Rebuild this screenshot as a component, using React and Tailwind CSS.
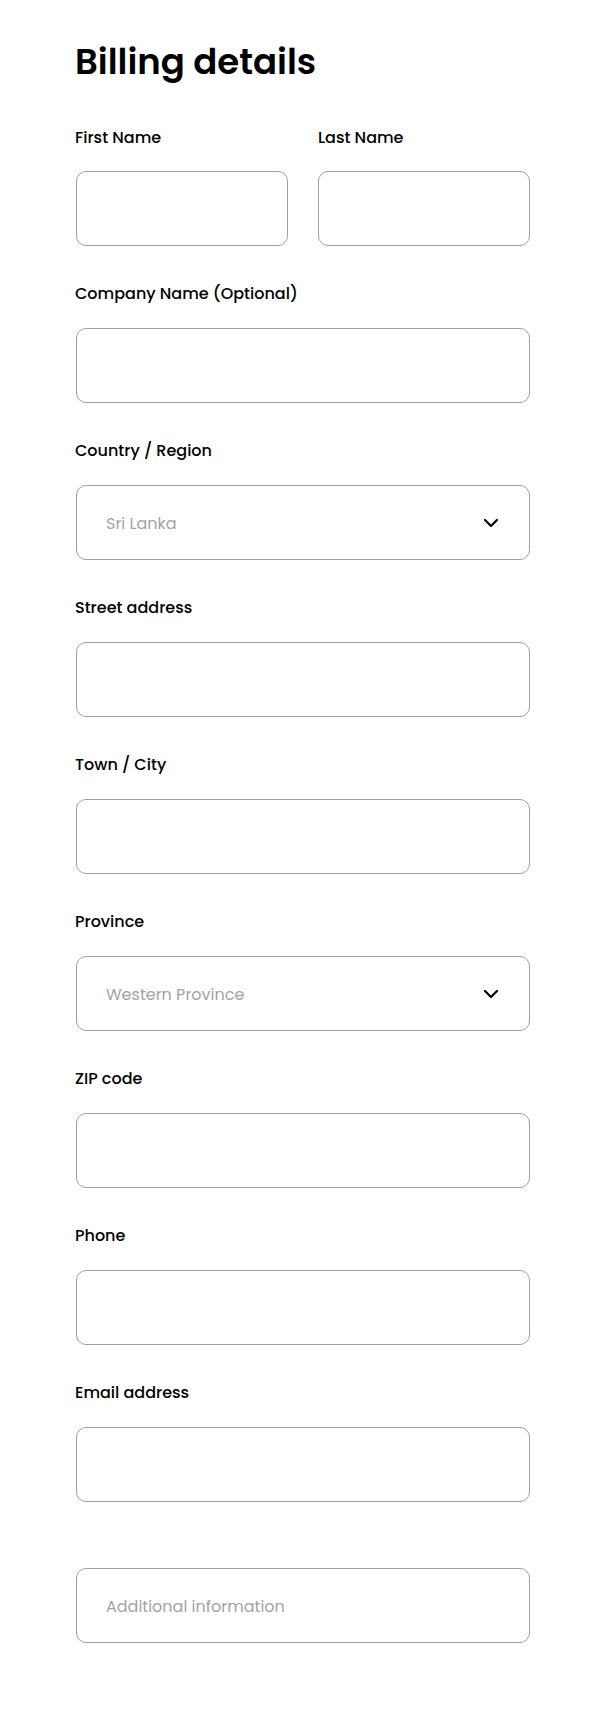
import React from "react";

const font = { fontFamily: "Poppins, Inter, 'Noto Sans', sans-serif" };

function Chevron() {
  return (
    <svg width="16" height="10" viewBox="0 0 16 10" fill="none">
      <path d="M2 2l6 6 6-6" stroke="#000" strokeWidth="2.2" strokeLinecap="round" strokeLinejoin="round" />
    </svg>
  );
}

function Box({ value, select, className = "" }) {
  return (
    <div className={"h-[75px] rounded-[10px] border border-[#a0a0a0] flex items-center justify-between pl-[29px] pr-[30px] " + className}>
      <span className="text-[16px] leading-[24px] pt-[2px] text-[#a3a3a3]">{value}</span>
      {select && <Chevron />}
    </div>
  );
}

function Label({ children, className = "" }) {
  return <div className={"text-[16px] leading-[24px] font-medium text-black " + className}>{children}</div>;
}

function Field({ label, value, select, className = "" }) {
  return (
    <div className={"flex flex-col " + className}>
      <Label>{label}</Label>
      <Box className="mt-[22px] ml-px" value={value} select={select} />
    </div>
  );
}

export default function App() {
  return (
    <div className="w-[608px] min-h-[1714px] bg-white" style={font}>
      <div className="ml-[75px] w-[455px] pt-[39px] pb-[71px] flex flex-col">
        <h1 className="text-[35.5px] leading-[46px] font-semibold text-black">Billing details</h1>
        <div className="mt-[41px] flex gap-x-[30px]">
          <div className="flex flex-col w-[213px]">
            <Label>First Name</Label>
            <Box className="mt-[21px] ml-px" />
          </div>
          <div className="flex flex-col w-[212px]">
            <Label>Last Name</Label>
            <Box className="mt-[21px]" />
          </div>
        </div>
        <Field className="mt-[36px]" label="Company Name (Optional)" />
        <Field className="mt-[36px]" label="Country / Region" value="Sri Lanka" select />
        <Field className="mt-[36px]" label="Street address" />
        <Field className="mt-[36px]" label="Town / City" />
        <Field className="mt-[36px]" label="Province" value="Western Province" select />
        <Field className="mt-[36px]" label="ZIP code" />
        <Field className="mt-[36px]" label="Phone" />
        <Field className="mt-[36px]" label="Email address" />
        <Box className="mt-[66px] ml-px" value="Additional information" />
      </div>
    </div>
  );
}
